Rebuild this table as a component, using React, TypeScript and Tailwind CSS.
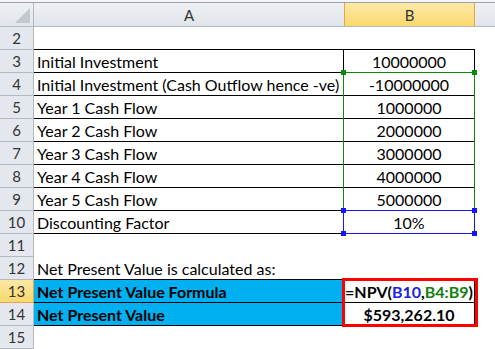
import React from 'react';

type Cell = {
  a?: React.ReactNode;
  b?: React.ReactNode;
  boxed?: boolean;
  bottomLine?: boolean;
  fill?: boolean;
  bold?: boolean;
  overflow?: boolean;
};

const rows: Record<number, Cell> = {
  2: { bottomLine: true },
  3: { a: 'Initial Investment', b: '10000000', boxed: true },
  4: { a: 'Initial Investment (Cash Outflow hence -ve)', b: '-10000000', boxed: true },
  5: { a: 'Year 1 Cash Flow', b: '1000000', boxed: true },
  6: { a: 'Year 2 Cash Flow', b: '2000000', boxed: true },
  7: { a: 'Year 3 Cash Flow', b: '3000000', boxed: true },
  8: { a: 'Year 4 Cash Flow', b: '4000000', boxed: true },
  9: { a: 'Year 5 Cash Flow', b: '5000000', boxed: true },
  10: { a: 'Discounting Factor', b: '10%', boxed: true },
  11: {},
  12: { a: 'Net Present Value is calculated as:', overflow: true, bottomLine: true },
  13: {
    a: 'Net Present Value Formula',
    b: (
      <span className="relative">
        =NPV(<span className="text-[#2020e0]">B10</span>,<span className="text-[#108010]">B4:B9</span>)
        <span className="absolute -right-[3px] top-[1px] h-[19px] w-px bg-black" />
      </span>
    ),
    boxed: true,
    fill: true,
    bold: true,
  },
  14: { a: 'Net Present Value', b: '$593,262.10', boxed: true, fill: true, bold: true },
  15: {},
};

function Row({ n }: { n: number }) {
  const r = rows[n];
  const active = n === 13;
  const line = r.boxed || r.bottomLine ? 'border-b-black' : 'border-b-transparent';
  return (
    <div className="flex h-[23px]">
      <div
        className={`w-[34px] shrink-0 border-r border-b flex items-center justify-center text-[15px] ${
          active
            ? 'bg-gradient-to-b from-[#fbe8a5] to-[#f9d86b] border-[#e2a657] text-[#333]'
            : 'bg-[#e4e8ee] border-[#b4b9c1] text-[#333]'
        }`}
      >
        {n}
      </div>
      <div
        className={`w-[310px] shrink-0 border-b ${line} ${r.boxed ? 'border-r border-r-black' : ''} ${
          r.fill ? 'bg-[#00b0f0]' : ''
        } ${r.bold ? 'font-bold' : ''} pl-[3px] flex items-end whitespace-nowrap ${
          r.overflow ? 'overflow-visible' : 'overflow-hidden'
        }`}
      >
        {r.a}
      </div>
      <div
        className={`w-[131px] shrink-0 border-b ${line} ${r.boxed ? 'border-r border-r-black' : ''} ${
          r.bold ? 'font-bold' : ''
        } flex items-end justify-center whitespace-nowrap`}
      >
        {r.b}
      </div>
      <div className="flex-1" />
    </div>
  );
}

export default function App() {
  const nums = [2, 3, 4, 5, 6, 7, 8, 9, 10, 11, 12, 13, 14, 15];
  return (
    <div
      className="w-[495px] h-[349px] overflow-hidden bg-white text-[16px] leading-[20px] text-black"
      style={{ fontFamily: 'Lato, "Liberation Sans", sans-serif' }}
    >
      <div className="h-[2px] bg-[#f3f5f8]" />
      <div className="h-px bg-[#9aa3af]" />
      {/* column headers */}
      <div className="flex h-[24px] bg-gradient-to-b from-[#eef0f4] to-[#e1e5eb] border-b border-[#b4b9c1] text-[#333] text-[15px]">
        <div className="w-[34px] shrink-0 border-r border-[#b4b9c1] flex items-end justify-end p-[3px]">
          <svg width="15" height="15" viewBox="0 0 15 15">
            <polygon points="15,0 15,15 0,15" fill="#c3c8cf" />
          </svg>
        </div>
        <div className="w-[310px] shrink-0 flex items-center justify-center">A</div>
        <div className="w-[131px] shrink-0 flex items-center justify-center bg-gradient-to-b from-[#fce9a6] to-[#fbd96c] border-x border-[#e0a64c]">
          B
        </div>
        <div className="flex-1" />
      </div>
      {/* body */}
      <div className="relative">
        {nums.map((n) => (
          <Row key={n} n={n} />
        ))}
        {/* B4:B9 green reference */}
        <div className="absolute left-[343px] top-[45px] w-[132px] h-[139px] border border-[#0b8a0b]">
          <div className="absolute -left-[3px] -top-[3px] w-[5px] h-[5px] bg-[#0b8a0b]" />
          <div className="absolute -right-[3px] -top-[3px] w-[5px] h-[5px] bg-[#0b8a0b]" />
        </div>
        {/* B10 blue reference */}
        <div className="absolute left-[343px] top-[183px] w-[132px] h-[24px] border border-[#1414ff]">
          <div className="absolute -left-[3px] -top-[3px] w-[5px] h-[5px] bg-[#1414ff]" />
          <div className="absolute -right-[3px] -top-[3px] w-[5px] h-[5px] bg-[#1414ff]" />
          <div className="absolute -left-[3px] -bottom-[3px] w-[5px] h-[5px] bg-[#1414ff]" />
          <div className="absolute -right-[3px] -bottom-[3px] w-[5px] h-[5px] bg-[#1414ff]" />
        </div>
        {/* red highlight */}
        <div className="absolute left-[342px] top-[251px] w-[136px] h-[49px] border-[3px] border-[#ff0000]" />
      </div>
    </div>
  );
}
